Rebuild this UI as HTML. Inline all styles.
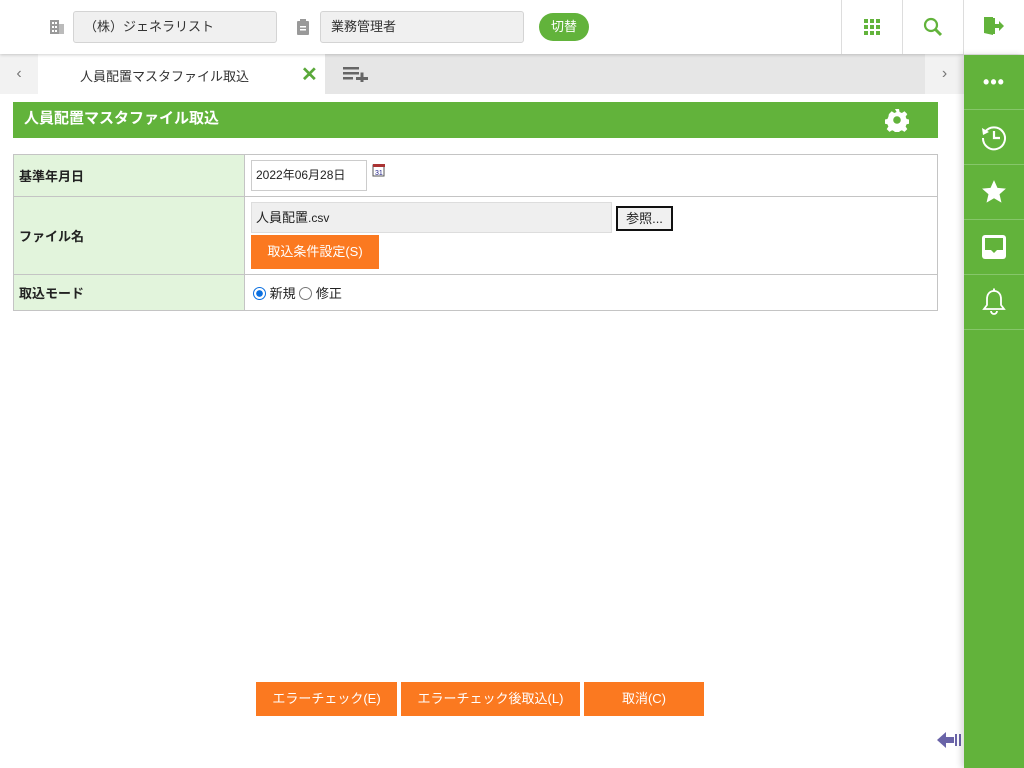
<!DOCTYPE html>
<html><head><meta charset="utf-8"><style>
*{box-sizing:border-box;margin:0;padding:0}
body{width:1024px;height:768px;position:relative;overflow:hidden;background:#fff;font-family:"Liberation Sans","Noto Sans CJK JP",sans-serif;font-size:13px;color:#222}
.abs{position:absolute}
.hdr{left:0;top:0;width:1024px;height:54px;background:#fff;box-shadow:0 1px 3px rgba(0,0,0,.18);z-index:2}
.inp{background:#f0f0f0;border:1px solid #d4d4d4;border-radius:3px;height:32px;top:11px;font-size:13px;line-height:30px;padding-left:10px;color:#333}
.green{background:#62b33b}
.vd{top:0;width:1px;height:54px;background:#ddd}
.side{left:964px;top:55px;width:60px;height:713px;background:#62b33b;box-shadow:-3px 0 6px rgba(0,0,0,.15);z-index:3}
.side .it{height:55px;border-bottom:1px solid #86c66a;display:flex;align-items:center;justify-content:center}
.btn{background:#fb7920;color:#fff;text-align:center;font-size:13px;line-height:34px;height:34px;top:682px}
td{border:1px solid #c4c4c4;vertical-align:middle}
</style></head><body>
<div class="abs hdr">
  <svg class="abs" style="left:49px;top:19px" width="16" height="16" viewBox="0 0 16 16"><rect x="1" y="1" width="9" height="14" fill="#999"/><rect x="10" y="5" width="5" height="10" fill="#bbb"/><g fill="#fff"><rect x="3" y="3" width="2" height="2"/><rect x="6" y="3" width="2" height="2"/><rect x="3" y="7" width="2" height="2"/><rect x="6" y="7" width="2" height="2"/><rect x="3" y="11" width="2" height="2"/><rect x="6" y="11" width="2" height="2"/></g></svg>
  <div class="abs inp" style="left:73px;width:204px">（株）ジェネラリスト</div>
  <svg class="abs" style="left:296px;top:19px" width="14" height="16" viewBox="0 0 14 16"><rect x="1" y="2" width="12" height="14" rx="1" fill="#999"/><rect x="4" y="0" width="6" height="4" fill="#999"/><rect x="4" y="7" width="6" height="1.5" fill="#fff"/><rect x="4" y="10" width="6" height="1.5" fill="#fff"/></svg>
  <div class="abs inp" style="left:320px;width:204px">業務管理者</div>
  <div class="abs green" style="left:539px;top:13px;width:50px;height:28px;border-radius:14px;color:#fff;text-align:center;line-height:28px;font-size:13px">切替</div>
  <div class="abs vd" style="left:841px"></div><div class="abs vd" style="left:902px"></div><div class="abs vd" style="left:963px"></div>
  <svg class="abs" style="left:864px;top:19px" width="16" height="16"><g fill="#62b33b"><rect x="0" y="0" width="4" height="4"/><rect x="6" y="0" width="4" height="4"/><rect x="12" y="0" width="4" height="4"/><rect x="0" y="6" width="4" height="4"/><rect x="6" y="6" width="4" height="4"/><rect x="12" y="6" width="4" height="4"/><rect x="0" y="12" width="4" height="4"/><rect x="6" y="12" width="4" height="4"/><rect x="12" y="12" width="4" height="4"/></g></svg>
  <svg class="abs" style="left:923px;top:17px" width="20" height="20"><circle cx="8" cy="8" r="6" fill="none" stroke="#62b33b" stroke-width="2.2"/><line x1="12.5" y1="12.5" x2="18" y2="18" stroke="#62b33b" stroke-width="3"/></svg>
  <svg class="abs" style="left:983px;top:16px" width="22" height="20"><path d="M1 1h9v18l-9-2z" fill="#62b33b"/><path d="M10 2h2v16h-2" fill="#62b33b"/><path d="M12 8h4V5l5 5-5 5v-3h-4z" fill="#62b33b"/></svg>
</div>
<div class="abs" style="left:0;top:54px;width:964px;height:40px;background:#e6e6e6"></div>
<div class="abs" style="left:0;top:54px;width:38px;height:40px;background:#f2f2f2;color:#777;text-align:center;line-height:40px;font-size:16px">‹</div>
<div class="abs" style="left:925px;top:54px;width:39px;height:40px;background:#f2f2f2;color:#777;text-align:center;line-height:40px;font-size:16px">›</div>
<div class="abs" style="left:38px;top:54px;width:287px;height:40px;background:#fff"></div>
<div class="abs" style="left:80px;top:66px;font-size:13px;color:#333">人員配置マスタファイル取込</div>
<div class="abs" style="left:301px;top:63px;font-size:20px;font-weight:bold;color:#5aa83a;line-height:24px">✕</div>
<svg class="abs" style="left:343px;top:66px" width="26" height="16"><g fill="#666"><rect x="0" y="1" width="16" height="2.5"/><rect x="0" y="6" width="16" height="2.5"/><rect x="0" y="11" width="10" height="2.5"/><rect x="13" y="11" width="12" height="3"/><rect x="17.5" y="6.5" width="3" height="12"/></g></svg>
<div class="abs green" style="left:13px;top:102px;width:925px;height:36px;color:#fff;font-weight:bold;font-size:15px;line-height:34px;padding-left:11px">人員配置マスタファイル取込</div>
<svg class="abs" style="left:885px;top:108px" width="24" height="24" viewBox="0 0 24 24"><path fill="#fff" d="M10 1h4l.6 3 2.3 1 2.6-1.7 2.8 2.8-1.7 2.6 1 2.3 3 .6v4l-3 .6-1 2.3 1.7 2.6-2.8 2.8-2.6-1.7-2.3 1-.6 3h-4l-.6-3-2.3-1-2.6 1.7-2.8-2.8 1.7-2.6-1-2.3-3-.6v-4l3-.6 1-2.3L3.9 6.1 6.7 3.3l2.6 1.7 2.3-1z"/><circle cx="12" cy="12" r="3.8" fill="#62b33b"/></svg>
<table class="abs" style="left:13px;top:154px;width:925px;border-collapse:collapse">
<tr style="height:42px"><td style="width:231px;background:#e2f4dc;font-weight:bold;padding-left:5px">基準年月日</td><td style="position:relative">
 <div class="abs" style="left:6px;top:5px;width:116px;height:31px;border:1px solid #ccc;line-height:29px;padding-left:4px;font-size:12px">2022年06月28日</div>
 <svg class="abs" style="left:127px;top:8px" width="14" height="14"><rect x="1" y="2" width="11" height="11" fill="#fff" stroke="#555"/><rect x="1" y="1" width="12" height="3" fill="#a33"/><text x="3" y="12" font-size="7" fill="#228" font-family="Liberation Sans">31</text></svg>
</td></tr>
<tr style="height:78px"><td style="background:#e2f4dc;font-weight:bold;padding-left:5px">ファイル名</td><td style="position:relative">
 <div class="abs" style="left:6px;top:5px;width:361px;height:31px;background:#efefef;border:1px solid #ddd;line-height:29px;padding-left:4px">人員配置<span style="font-size:12px">.csv</span></div>
 <div class="abs" style="left:371px;top:9px;width:57px;height:25px;border:2px solid #111;background:#f0f0f0;text-align:center;line-height:21px">参照...</div>
 <div class="abs" style="left:6px;top:38px;width:128px;height:34px;background:#fb7920;color:#fff;text-align:center;line-height:34px">取込条件設定(S)</div>
</td></tr>
<tr style="height:36px"><td style="background:#e2f4dc;font-weight:bold;padding-left:5px">取込モード</td><td style="padding-left:8px">
 <span style="display:inline-block;width:13px;height:13px;border-radius:50%;border:1px solid #0a6fe0;background:radial-gradient(#0a6fe0 40%,#fff 45%);vertical-align:-2px"></span> 新規 <span style="display:inline-block;width:13px;height:13px;border-radius:50%;border:1px solid #777;vertical-align:-2px"></span> 修正
</td></tr>
</table>
<div class="abs btn" style="left:256px;width:141px">エラーチェック(E)</div>
<div class="abs btn" style="left:401px;width:179px">エラーチェック後取込(L)</div>
<div class="abs btn" style="left:584px;width:120px">取消(C)</div>
<svg class="abs" style="left:937px;top:730px" width="26" height="20"><path d="M0 10 9 2v5h8v6H9v5z" fill="#6a64a8"/><rect x="18" y="4" width="2" height="12" fill="#6a64a8"/><rect x="22" y="4" width="2" height="12" fill="#6a64a8"/></svg>
<div class="abs side">
 <div class="it"><span style="color:#fff;font-size:18px;font-weight:bold;letter-spacing:1px;line-height:10px">•••</span></div>
 <div class="it"><svg width="28" height="28" viewBox="0 0 28 28"><path d="M5 9A11 11 0 1 1 3 15" fill="none" stroke="#fff" stroke-width="2"/><path d="M2 5l1 7 6-3z" fill="#fff"/><path d="M14 8v7h6" fill="none" stroke="#fff" stroke-width="2.2"/></svg></div>
 <div class="it"><svg width="26" height="26" viewBox="0 0 24 24"><path fill="#fff" d="M12 1l3.2 7.2 7.8.7-5.9 5.2 1.8 7.7L12 17.8 5.1 21.8l1.8-7.7L1 8.9l7.8-.7z"/></svg></div>
 <div class="it"><svg width="26" height="26" viewBox="0 0 26 26"><rect x="1" y="1" width="24" height="24" rx="3" fill="#fff"/><path d="M4 4h18v12h-6l-3 3-3-3H4z" fill="#62b33b"/></svg></div>
 <div class="it"><svg width="26" height="28" viewBox="0 0 26 28"><path d="M13 3c-5 0-7 4-7 8v6l-3 4h20l-3-4v-6c0-4-2-8-7-8z" fill="none" stroke="#fff" stroke-width="1.8"/><path d="M10 23a3 3 0 0 0 6 0" fill="none" stroke="#fff" stroke-width="1.8"/><rect x="12" y="0.5" width="2" height="3" fill="#fff"/></svg></div>
</div>
</body></html>
